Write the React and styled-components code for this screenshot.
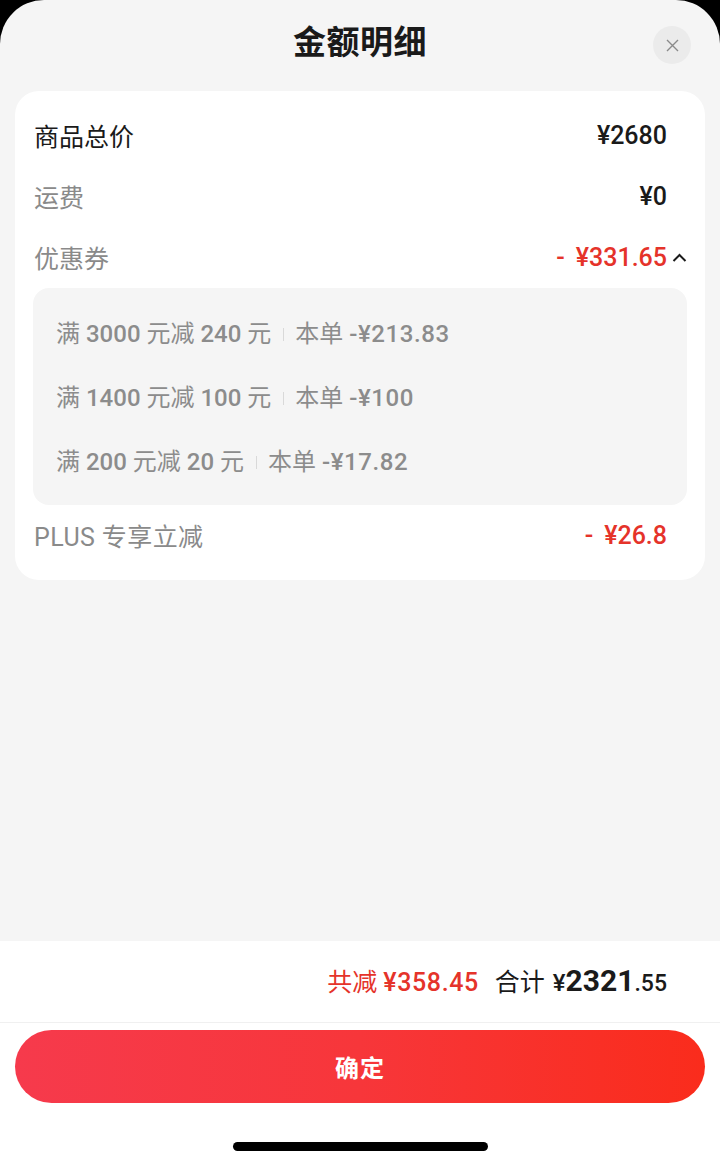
import React from "react";
import styled, { createGlobalStyle } from "styled-components";

const GlobalStyle = createGlobalStyle`
  html, body {
    margin: 0;
    padding: 0;
    background: #000;
  }
  body {
    font-family: Roboto, "Noto Sans CJK SC", sans-serif;
    -webkit-font-smoothing: antialiased;
  }
`;

const Sheet = styled.div`
  display: flex;
  flex-direction: column;
  min-height: 100vh;
  background: #f5f5f5;
  border-radius: 44px 44px 0 0;
  overflow: hidden;
`;

const Header = styled.div`
  display: grid;
  grid-template-columns: 1fr auto 1fr;
  align-items: center;
  height: 91px;
  flex-shrink: 0;
`;

const Title = styled.h1`
  grid-column: 2;
  margin: 0 0 5px;
  font-size: 33px;
  line-height: 40px;
  font-weight: 700;
  color: #1a1a1a;
  letter-spacing: 0.5px;
`;

const CloseButton = styled.button`
  grid-column: 3;
  justify-self: end;
  margin: 0 29px 1px 0;
  width: 38px;
  height: 38px;
  border: none;
  border-radius: 50%;
  background: #ebebeb;
  display: flex;
  align-items: center;
  justify-content: center;
  padding: 0;
  cursor: pointer;
`;

const Card = styled.div`
  margin: 0 15px;
  padding: 14px 18px 14px;
  background: #fff;
  border-radius: 24px;
`;

const Row = styled.div`
  display: flex;
  align-items: center;
  justify-content: space-between;
  height: 61px;
  padding-left: 1px;
`;

const Label = styled.span`
  font-size: 25px;
  margin-bottom: 2px;
  color: ${(p) => (p.dark ? "#1a1a1a" : "#8a8a8a")};
  letter-spacing: ${(p) => (p.wide ? "0.4px" : "0")};
  white-space: pre;
`;

const Right = styled.div`
  display: flex;
  align-items: center;
`;

const Value = styled.span`
  font-size: 25px;
  font-weight: 500;
  color: ${(p) => (p.red ? "#e5332a" : "#1a1a1a")};
  white-space: pre;
`;

const Minus = styled.span`
  display: inline-block;
  margin-right: 11px;
`;

const Trail = styled.span`
  width: 20px;
  display: flex;
  align-items: center;
  justify-content: flex-end;
`;

const CouponPanel = styled.div`
  background: #f5f5f5;
  border-radius: 16px;
  padding: 14px 23px 11px;
`;

const CouponLine = styled.div`
  display: flex;
  align-items: center;
  height: 64px;
  font-size: 24px;
  color: #8c8c8c;
  white-space: pre;
`;

const LineText = styled.span`
  line-height: 30px;
`;

const Num = styled.span`
  font-weight: 500;
  letter-spacing: ${(p) => (p.wide ? "0.6px" : "0")};
`;

const Divider = styled.span`
  width: 1px;
  height: 13px;
  background: #d9d9d9;
  margin: 0 11px 0 12px;
`;

const Spacer = styled.div`
  flex: 1;
`;

const Footer = styled.div`
  background: #fff;
  display: flex;
  flex-direction: column;
  flex-shrink: 0;
`;

const Summary = styled.div`
  display: flex;
  align-items: baseline;
  justify-content: flex-end;
  height: 82px;
  padding: 21px 53px 0 0;
  box-sizing: border-box;
  border-bottom: 1px solid #f0f0f0;
  white-space: pre;
`;

const Saved = styled.span`
  font-size: 25px;
  font-weight: 500;
  color: #e5332a;
  margin-right: 16px;
  letter-spacing: 0.6px;
`;

const SavedLabel = styled.span`
  font-weight: 400;
  letter-spacing: 0;
`;

const Total = styled.span`
  font-size: 25px;
  color: #1a1a1a;
`;

const Yen = styled.span`
  font-size: 24px;
  font-weight: 500;
  margin-left: 8px;
`;

const Big = styled.span`
  font-size: 30px;
  font-weight: 700;
`;

const Cents = styled.span`
  font-size: 23px;
  font-weight: 500;
`;

const ConfirmButton = styled.button`
  margin: 7px 15px 0;
  height: 73px;
  border: none;
  border-radius: 37px;
  background: linear-gradient(90deg, #f63a4c 0%, #f7363a 50%, #fa2c1c 100%);
  color: #fff;
  font-family: inherit;
  font-size: 24px;
  font-weight: 700;
  letter-spacing: 1px;
  cursor: pointer;
`;

const HomeBar = styled.div`
  width: 255px;
  height: 9px;
  border-radius: 5px;
  background: #000;
  margin: 39px auto 15px;
`;

const coupons = [
  { full: "3000", off: "240", cut: "-¥213.83" },
  { full: "1400", off: "100", cut: "-¥100" },
  { full: "200", off: "20", cut: "-¥17.82" },
];

export default function App() {
  return (
    <>
      <GlobalStyle />
      <Sheet>
        <Header>
          <Title>金额明细</Title>
          <CloseButton aria-label="关闭">
            <svg width="13" height="13" viewBox="0 0 13 13">
              <path d="M1 1L12 12M12 1L1 12" stroke="#8a8a8a" strokeWidth="1.4" />
            </svg>
          </CloseButton>
        </Header>

        <Card>
          <Row>
            <Label dark>商品总价</Label>
            <Right>
              <Value>¥2680</Value>
              <Trail />
            </Right>
          </Row>
          <Row>
            <Label>运费</Label>
            <Right>
              <Value>¥0</Value>
              <Trail />
            </Right>
          </Row>
          <Row>
            <Label>优惠券</Label>
            <Right>
              <Value red>
                <Minus>-</Minus>¥331.65
              </Value>
              <Trail>
                <svg width="15" height="10" viewBox="0 0 15 10">
                  <path d="M1.5 8L7.5 2L13.5 8" fill="none" stroke="#1a1a1a" strokeWidth="2" />
                </svg>
              </Trail>
            </Right>
          </Row>
          <CouponPanel>
            {coupons.map((c) => (
              <CouponLine key={c.full}>
                <LineText>
                  满 <Num>{c.full}</Num> 元减 <Num>{c.off}</Num> 元
                </LineText>
                <Divider />
                <LineText>
                  本单 <Num wide>{c.cut}</Num>
                </LineText>
              </CouponLine>
            ))}
          </CouponPanel>
          <Row>
            <Label wide>PLUS 专享立减</Label>
            <Right>
              <Value red>
                <Minus>-</Minus>¥26.8
              </Value>
              <Trail />
            </Right>
          </Row>
        </Card>

        <Spacer />

        <Footer>
          <Summary>
            <Saved>
              <SavedLabel>共减 </SavedLabel>¥358.45
            </Saved>
            <Total>
              合计<Yen>¥</Yen>
              <Big>2321</Big>
              <Cents>.55</Cents>
            </Total>
          </Summary>
          <ConfirmButton>确定</ConfirmButton>
          <HomeBar />
        </Footer>
      </Sheet>
    </>
  );
}
